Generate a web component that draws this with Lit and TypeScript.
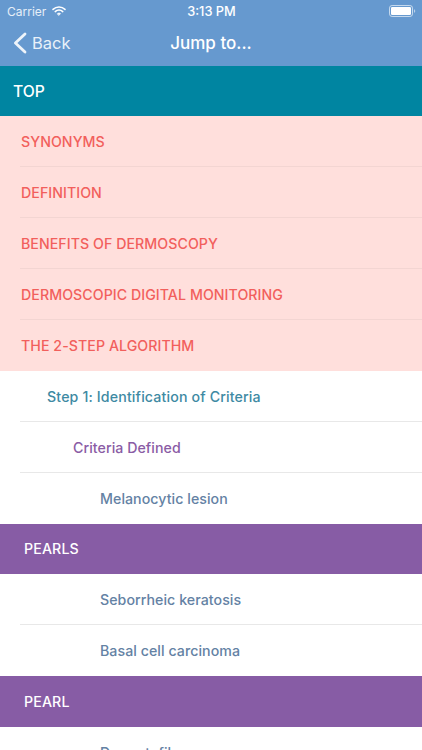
import { LitElement, html, css, svg } from "lit";
import { customElement } from "lit/decorators.js";

type Row = { t: string; k: string };
const ROWS: Row[] = [
  { t: "TOP", k: "top" },
  { t: "SYNONYMS", k: "pink" },
  { t: "DEFINITION", k: "pink" },
  { t: "BENEFITS OF DERMOSCOPY", k: "pink" },
  { t: "DERMOSCOPIC DIGITAL MONITORING", k: "pink" },
  { t: "THE 2-STEP ALGORITHM", k: "pink" },
  { t: "Step 1: Identification of Criteria", k: "l1" },
  { t: "Criteria Defined", k: "l2" },
  { t: "Melanocytic lesion", k: "l3" },
  { t: "PEARLS", k: "pearl" },
  { t: "Seborrheic keratosis", k: "l3" },
  { t: "Basal cell carcinoma", k: "l3" },
  { t: "PEARL", k: "pearl" },
  { t: "Dermatofibroma", k: "l3" },
];

@customElement("app-root")
export class AppRoot extends LitElement {
  static styles = css`
    :host {
      display: block;
      width: 422px;
      height: 750px;
      overflow: hidden;
      background: #fff;
      font-family: Inter, "Liberation Sans", sans-serif;
    }
    .header {
      height: 66px;
      background: #6699cf;
      color: #fff;
      display: flex;
      flex-direction: column;
    }
    .status {
      height: 22px;
      display: grid;
      grid-template-columns: 1fr auto 1fr;
      align-items: center;
      padding: 0 6px 0 7px;
      font-size: 12px;
      box-sizing: border-box;
    }
    .left { display: flex; align-items: center; gap: 6px; color: #e6eff8; }
    .time { font-size: 12.8px; font-weight: 500; }
    .right { display: flex; justify-content: flex-end; }
    .nav {
      flex: 1;
      display: grid;
      grid-template-columns: 1fr auto 1fr;
      align-items: center;
      padding: 0 0 2px 0;
    }
    .back { display: flex; align-items: center; gap: 5px; font-size: 16.5px; color: #e9f1f9; padding-left: 13px; }
    .title { font-size: 17px; font-weight: 500; }
    .list { display: flex; flex-direction: column; }
    .row {
      height: 50.9px;
      flex: none;
      box-sizing: border-box;
      display: flex;
      align-items: center;
      font-size: 14.2px;
      font-weight: 550;
      letter-spacing: 0.05px;
      position: relative;
    }
    .row::after {
      content: "";
      position: absolute;
      left: 20px;
      right: 0;
      bottom: 0;
      height: 1px;
    }
    .top { background: #0085a1; color: #fff; font-size: 15.7px; padding-left: 13px; height: 50.4px; letter-spacing: 0; }
    .pink { background: #ffdfdc; color: #f25f5c; padding-left: 21px; }
    .pink::after { background: #f3d5d2; }
    .pink.last::after { display: none; }
    .l1 { color: #3e8aa3; padding-left: 47px; letter-spacing: 0.14px; }
    .l2 { color: #8a5ca5; padding-left: 73px; }
    .l3 { color: #6482a4; padding-left: 100px; font-weight: 500; }
    .l1::after, .l2::after, .l3::after { background: #e8e8e8; }
    .l3.last::after { display: none; }
    .pearl { background: #875ca5; color: #fff; padding-left: 24px; font-weight: 500; letter-spacing: 0.12px; }
  `;

  render() {
    return html`
      <div class="header">
        <div class="status">
          <div class="left">
            <span>Carrier</span>
            <svg width="14" height="10" viewBox="0 0 14 10" fill="none" stroke="#fff" stroke-linecap="round">
              ${svg`<path d="M1 3.4C4.4 .2 9.6 .2 13 3.4" stroke-width="1.5"/>
              <path d="M3.2 5.6C5.4 3.6 8.6 3.6 10.8 5.6" stroke-width="1.5"/>
              <path d="M5.4 7.6C6.3 6.8 7.7 6.8 8.6 7.6L7 9.3Z" fill="#fff" stroke-width="0.6"/>`}
            </svg>
          </div>
          <span class="time">3:13 PM</span>
          <div class="right">
            <svg width="27" height="12" viewBox="0 0 27 12" fill="none">
              ${svg`<rect x="0.5" y="0.5" width="23" height="11" rx="2.6" stroke="#dfeaf5" stroke-opacity=".8"/>
              <rect x="2" y="2" width="20" height="8" rx="1.2" fill="#fff"/>
              <path d="M25 4.2c.8.2 1.2.9 1.2 1.8s-.4 1.6-1.2 1.8z" fill="#dfeaf5" fill-opacity=".7"/>`}
            </svg>
          </div>
        </div>
        <div class="nav">
          <div class="back">
            <svg width="14" height="22" viewBox="0 0 14 22" fill="none" stroke="#eef4fa" stroke-width="2.8" stroke-linecap="round" stroke-linejoin="round">
              ${svg`<path d="M12 2L2.4 11L12 20"/>`}
            </svg>
            <span>Back</span>
          </div>
          <div class="title">Jump to...</div>
          <div></div>
        </div>
      </div>
      <div class="list">
        ${ROWS.map((r, i) => {
          const next = ROWS[i + 1];
          const last = !next || next.k !== r.k && (next.k === "pearl" || r.k === "pink");
          return html`<div class="row ${r.k} ${last ? "last" : ""}">${r.t}</div>`;
        })}
      </div>
    `;
  }
}
